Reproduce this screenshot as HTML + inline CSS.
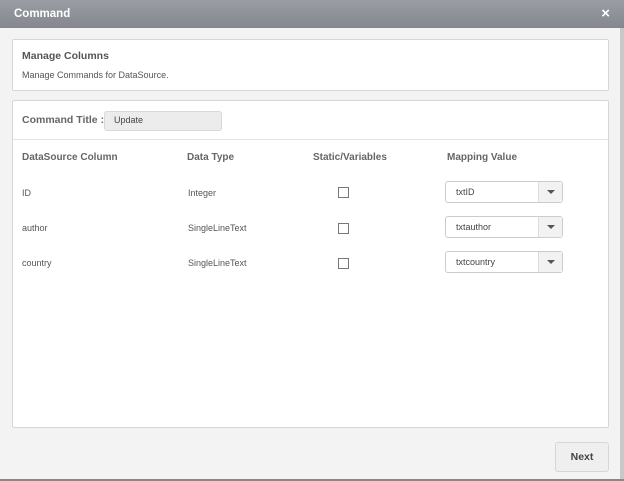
<!DOCTYPE html>
<html><head><style>
*{box-sizing:border-box;margin:0;padding:0}
body{width:624px;height:481px;background:#f3f3f3;font-family:"Liberation Sans",sans-serif;color:#555;position:relative;overflow:hidden;font-size:10px}
.hdr{position:absolute;left:0;top:0;width:624px;height:28px;background:linear-gradient(#9a9da3,#84878e);color:#fff;font-weight:bold;font-size:11.5px;padding:8px 0 0 14px}
.x{position:absolute;right:14px;top:5px;font-size:15px;font-weight:bold}
.p{position:absolute;background:#fff;border:1px solid #d6d6d6;border-radius:2px}
.a{position:absolute;white-space:nowrap}
.h{font-weight:bold;color:#666;font-size:10px}
.cb{position:absolute;width:11px;height:11px;border:1px solid #777;background:#fff}
.sel{position:absolute;left:445px;width:118px;height:22px;border:1px solid #ccc;border-radius:3px;background:#fff}
.sel span{position:absolute;left:10px;top:5px;font-size:9px;color:#444}
.sel i{position:absolute;right:0;top:0;width:24px;height:20px;border-left:1px solid #ddd;background:#f2f2f2}
.sel i:after{content:"";position:absolute;left:8px;top:8px;border:4px solid transparent;border-top:4px solid #555;border-bottom:0}
</style></head><body>
<div class="hdr">Command<span class="x">×</span></div>
<div class="p" style="left:12px;top:39px;width:597px;height:52px"></div>
<div class="a" style="left:22px;top:50px;font-size:10.5px;font-weight:bold;color:#555">Manage Columns</div>
<div class="a" style="left:22px;top:70px;font-size:9px;color:#555">Manage Commands for DataSource.</div>
<div class="p" style="left:12px;top:100px;width:597px;height:328px"></div>
<div style="position:absolute;left:13px;top:139px;width:595px;height:1px;background:#e2e2e2"></div>
<div class="a h" style="left:22px;top:114px;font-size:10.5px">Command Title :</div>
<div style="position:absolute;left:104px;top:111px;width:118px;height:20px;background:#ececec;border:1px solid #d8d8d8;border-radius:3px"></div>
<div class="a" style="left:114px;top:115px;font-size:9px;color:#444">Update</div>
<div class="a h" style="left:22px;top:152px">DataSource Column</div>
<div class="a h" style="left:187px;top:152px">Data Type</div>
<div class="a h" style="left:313px;top:152px">Static/Variables</div>
<div class="a h" style="left:447px;top:152px">Mapping Value</div>
<div class="a" style="left:22px;top:188px;font-size:9px">ID</div>
<div class="a" style="left:188px;top:188px;font-size:9px">Integer</div>
<div class="cb" style="left:338px;top:187px"></div>
<div class="sel" style="top:181px"><span>txtID</span><i></i></div>
<div class="a" style="left:22px;top:223px;font-size:9px">author</div>
<div class="a" style="left:188px;top:223px;font-size:9px">SingleLineText</div>
<div class="cb" style="left:338px;top:223px"></div>
<div class="sel" style="top:216px"><span>txtauthor</span><i></i></div>
<div class="a" style="left:22px;top:258px;font-size:9px">country</div>
<div class="a" style="left:188px;top:258px;font-size:9px">SingleLineText</div>
<div class="cb" style="left:338px;top:258px"></div>
<div class="sel" style="top:251px"><span>txtcountry</span><i></i></div>
<div style="position:absolute;left:555px;top:442px;width:54px;height:30px;background:#efefef;border:1px solid #d6d6d6;border-radius:3px;font-weight:bold;font-size:10.5px;color:#444;text-align:center;line-height:28px">Next</div>
<div style="position:absolute;left:620px;top:28px;width:4px;height:453px;background:#c8c8c8"></div>
<div style="position:absolute;left:0;top:479px;width:624px;height:2px;background:#888"></div>
</body></html>
